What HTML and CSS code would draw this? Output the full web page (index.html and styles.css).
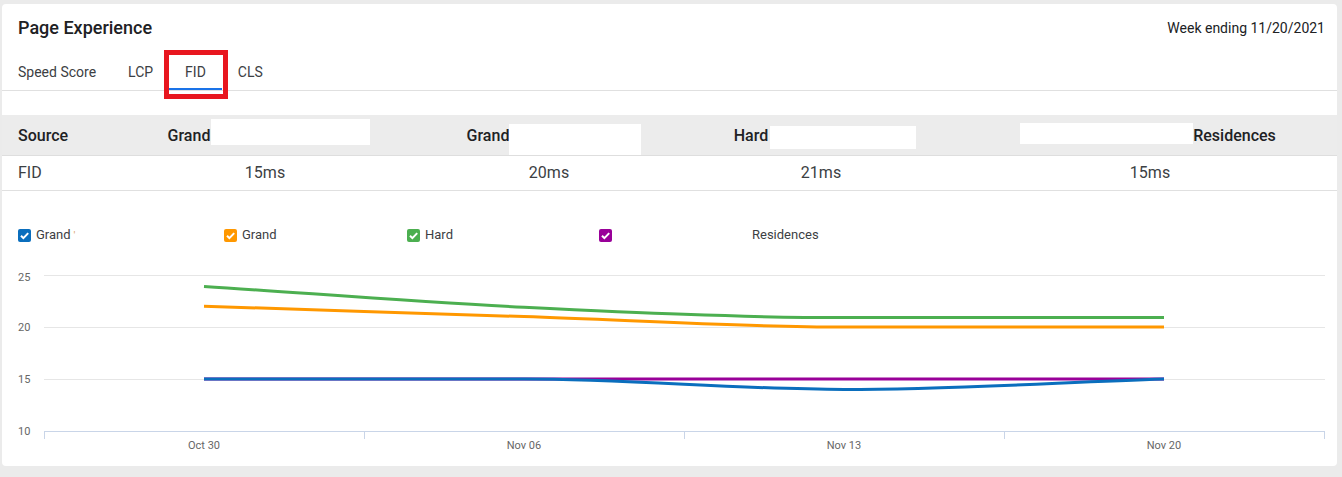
FILE: index.html
```html
<!DOCTYPE html>
<html lang="en">
<head>
<meta charset="utf-8">
<title>Page Experience</title>
<link rel="stylesheet" href="styles.css">
</head>
<body>
<div class="card">
  <div class="head">
    <h1 class="title">Page Experience</h1>
    <div class="week">Week ending 11/20/2021</div>
  </div>
  <div class="tabs">
    <div class="tab">Speed Score</div>
    <div class="tab">LCP</div>
    <div class="tab active marked">FID</div>
    <div class="tab">CLS</div>
  </div>

  <div class="table">
    <div class="row header">
      <div class="cell first">Source</div>
      <div class="cell h2"><span>Grand</span><span class="redact r1"></span></div>
      <div class="cell h3"><span>Grand</span><span class="redact r2"></span></div>
      <div class="cell h4"><span>Hard</span><span class="redact r3"></span></div>
      <div class="cell h5"><span class="redact r4"></span><span>Residences</span></div>
    </div>
    <div class="row data">
      <div class="cell first">FID</div>
      <div class="cell d2">15ms</div>
      <div class="cell d3">20ms</div>
      <div class="cell d4">21ms</div>
      <div class="cell">15ms</div>
    </div>
  </div>

  <div class="legend">
    <div class="item i1">
      <span class="box blue"><svg viewBox="0 0 13 13"><path d="M3 6.7 L5.4 9.1 L10.2 4.1"/></svg></span>
      <span class="label">Grand</span><span class="tick">'</span>
    </div>
    <div class="item i2">
      <span class="box orange"><svg viewBox="0 0 13 13"><path d="M3 6.7 L5.4 9.1 L10.2 4.1"/></svg></span>
      <span class="label">Grand</span>
    </div>
    <div class="item i3">
      <span class="box green"><svg viewBox="0 0 13 13"><path d="M3 6.7 L5.4 9.1 L10.2 4.1"/></svg></span>
      <span class="label">Hard</span>
    </div>
    <div class="item i4">
      <span class="box purple"><svg viewBox="0 0 13 13"><path d="M3 6.7 L5.4 9.1 L10.2 4.1"/></svg></span>
      <span class="label far">Residences</span>
    </div>
  </div>

  <svg class="chart" width="1335" height="200" viewBox="0 0 1335 200">
    <g class="grid">
      <line x1="42" y1="15.5" x2="1323" y2="15.5"/>
      <line x1="42" y1="67.5" x2="1323" y2="67.5"/>
      <line x1="42" y1="119.5" x2="1323" y2="119.5"/>
    </g>
    <g class="axis">
      <line x1="42" y1="171.5" x2="1323" y2="171.5"/>
      <line x1="42.5" y1="171" x2="42.5" y2="179"/>
      <line x1="362.5" y1="171" x2="362.5" y2="179"/>
      <line x1="682.5" y1="171" x2="682.5" y2="179"/>
      <line x1="1002.5" y1="171" x2="1002.5" y2="179"/>
      <line x1="1322.5" y1="171" x2="1322.5" y2="179"/>
    </g>
    <g class="ylabels">
      <text x="16" y="21">25</text>
      <text x="16" y="71">20</text>
      <text x="16" y="123">15</text>
      <text x="16" y="175">10</text>
    </g>
    <g class="xlabels">
      <text x="202" y="189">Oct 30</text>
      <text x="522" y="189">Nov 06</text>
      <text x="842" y="189">Nov 13</text>
      <text x="1162" y="189">Nov 20</text>
    </g>
    <g class="lines">
      <path class="l-purple" d="M202 119 L1162 119"/>
      <path class="l-green" d="M202 26.4 C308.67 33.3 415.33 42 522 47.2 C628.67 52.4 735.33 57.6 842 57.6 L1162 57.6"/>
      <path class="l-orange" d="M202 46.2 C308.67 49.67 415.33 53.13 522 56.6 C628.67 60.07 735.33 67 842 67 L1162 67"/>
      <path class="l-blue" d="M202 119 L522 119 C628.67 119 735.33 129.4 842 129.4 C948.67 129.4 1055.33 122.47 1162 119"/>
    </g>
  </svg>
</div>
</body>
</html>
```

FILE: styles.css
```css
html, body {
  margin: 0;
  padding: 0;
}

body {
  background: #ebebeb;
  padding: 4px 5px 11px 2px;
  font-family: Roboto, "Liberation Sans", Arial, sans-serif;
  color: #202124;
}

.card {
  background: #ffffff;
  border-radius: 4px;
  padding-bottom: 6px;
}

.head {
  display: flex;
  justify-content: space-between;
  align-items: center;
  padding: 14px 12px 0 16px;
  height: 20px;
  margin-bottom: 17px;
}

.title {
  margin: 0;
  font-size: 18px;
  font-weight: 500;
  line-height: 20px;
  color: #202124;
}

.week {
  font-size: 14px;
  line-height: 20px;
  color: #202124;
}

.tabs {
  display: flex;
  height: 35px;
  border-bottom: 1px solid #e0e0e0;
}

.tab {
  padding: 0 16px;
  font-size: 14px;
  line-height: 35px;
  color: #3c4043;
}

.tab.active {
  box-shadow: inset 0 -2px 0 #1a73e8;
}

.marked {
  position: relative;
}

.marked::after {
  content: "";
  position: absolute;
  top: -5px;
  left: -5px;
  right: -6px;
  bottom: -9px;
  border: 5px solid #e8161f;
}

.table {
  margin-top: 24px;
}

.row {
  display: grid;
  grid-template-columns: 109px 310px 262px 280px 1fr;
}

.row.header {
  height: 40px;
  background: #ececec;
  border-bottom: 1px solid #dedede;
  font-size: 16px;
  font-weight: 500;
  color: #202124;
}

.row.data {
  height: 34px;
  border-bottom: 1px solid #e0e0e0;
  font-size: 16px;
  line-height: 32px;
  color: #3c4043;
}

.cell {
  display: flex;
  justify-content: center;
  align-items: center;
}

.cell.first {
  justify-content: flex-start;
  padding-left: 16px;
}

.h2 { padding-left: 6px; }
.h3 { padding-left: 4px; }
.h4 { padding-left: 4px; }
.h5 { padding-right: 4px; }
.d2 { padding-right: 2px; }
.d3 { padding-right: 6px; }
.d4 { padding-right: 4px; }

.redact {
  display: block;
  background: #ffffff;
  align-self: flex-start;
}

.r1 { width: 159px; height: 26px; margin-top: 4px; margin-left: 1px; }
.r2 { width: 132px; height: 31px; margin-top: 9px; margin-left: 0; }
.r3 { width: 146px; height: 23px; margin-top: 11px; margin-left: 2px; }
.r4 { width: 173px; height: 21px; margin-top: 8px; }

.legend {
  display: flex;
  padding: 37px 16px 0 16px;
  height: 14px;
  align-items: center;
}

.item {
  display: flex;
  align-items: center;
  font-size: 13px;
  color: #3c4043;
}

.i1 { width: 206px; }
.i2 { width: 183px; }
.i3 { width: 192px; }

.box {
  width: 13px;
  height: 13px;
  border-radius: 2px;
  display: block;
}

.box svg {
  display: block;
  width: 13px;
  height: 13px;
  fill: none;
  stroke: #ffffff;
  stroke-width: 2;
}

.blue { background: #0a6ebd; }
.orange { background: #ff9800; }
.green { background: #4caf50; }
.purple { background: #990099; }

.label {
  margin-left: 5px;
  line-height: 14px;
}

.label.far {
  margin-left: 140px;
}

.tick {
  margin-left: 3px;
  color: #d9a46a;
  font-size: 11px;
}

.chart {
  display: block;
  margin-top: 18px;
}

.grid line {
  stroke: #e6e6e6;
  stroke-width: 1;
}

.axis line {
  stroke: #c9d5e8;
  stroke-width: 1;
}

.ylabels text {
  font-family: Roboto, "Liberation Sans", Arial, sans-serif;
  font-size: 11px;
  fill: #666666;
}

.xlabels text {
  font-family: Roboto, "Liberation Sans", Arial, sans-serif;
  font-size: 11px;
  fill: #666666;
  text-anchor: middle;
}

.lines path {
  fill: none;
  stroke-width: 3;
}

.l-green { stroke: #4caf50; }
.l-orange { stroke: #ff9800; }
.l-blue { stroke: #0a6ebd; }
.l-purple { stroke: #990099; }
```
